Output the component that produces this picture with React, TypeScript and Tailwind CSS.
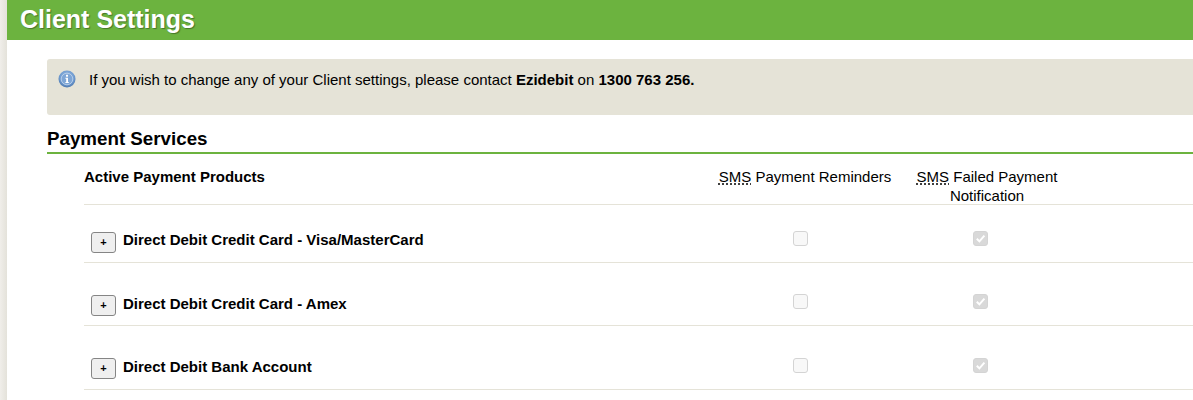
const font = { fontFamily: '"Liberation Sans", Arial, sans-serif' };

function InfoIcon() {
  return (
    <svg width="18" height="18" viewBox="0 0 18 18" className="shrink-0">
      <defs>
        <radialGradient id="g" cx="50%" cy="40%" r="60%">
          <stop offset="0%" stopColor="#a9c6e8" />
          <stop offset="70%" stopColor="#6f9bd0" />
          <stop offset="100%" stopColor="#4a76ad" />
        </radialGradient>
      </defs>
      <circle cx="9" cy="9" r="8.5" fill="url(#g)" />
      <circle cx="9" cy="9" r="5.8" fill="#7ea6d6" stroke="#c3d6ec" strokeWidth="0.8" />
      <rect x="8" y="4.8" width="2" height="1.9" fill="#fff" />
      <path d="M7.4 7.7h2.6v4.2h0.8v1.1H7.4v-1.1h0.8V8.8H7.4z" fill="#fff" />
    </svg>
  );
}

function Check({ checked }: { checked?: boolean }) {
  return (
    <span
      className={
        "flex h-[15px] w-[15px] items-center justify-center rounded-[3px] border border-[#d4d4d4] " +
        (checked ? "bg-[#d9d9d9]" : "bg-[#f8f8f8]")
      }
    >
      {checked && (
        <svg width="11" height="11" viewBox="0 0 11 11">
          <path d="M1.8 5.8 4.4 8.4 9.4 2.6" fill="none" stroke="#fff" strokeWidth="2" />
        </svg>
      )}
    </span>
  );
}

function Row({
  name,
  className,
  textClass,
  checkClass,
}: {
  name: string;
  className: string;
  textClass: string;
  checkClass: string;
}) {
  return (
    <div className={"flex items-start border-b border-[#e5e3d8] " + className}>
      <div className="flex w-[628px] items-start">
        <span className="ml-[7px] mt-[1px] flex h-[21px] w-[25px] items-center justify-center rounded-[3px] border border-[#858585] bg-[#efefef] text-[11px] font-bold leading-none text-black">
          +
        </span>
        <span className={"ml-[7px] text-[15px] font-bold leading-[18px] text-black " + textClass}>{name}</span>
      </div>
      <div className={"ml-[-20px] flex w-[216px] justify-center " + checkClass}>
        <Check />
      </div>
      <div className={"ml-[-18px] flex w-[180px] justify-center " + checkClass}>
        <Check checked />
      </div>
    </div>
  );
}

function Sms() {
  return <abbr className="underline decoration-dotted underline-offset-2">SMS</abbr>;
}

export default function App() {
  return (
    <div className="flex h-[400px] w-[1193px] overflow-hidden bg-white text-black" style={font}>
      <div className="h-full w-[7px] shrink-0 bg-gradient-to-r from-[#f0eeea] to-[#e4e2da]" />
      <div className="min-w-0 flex-1">
        <div className="flex h-[40px] items-center bg-[#6cb33f] pb-[1px] pl-[13px]">
          <h1 className="text-[25px] font-bold leading-none text-white [text-shadow:1px_1px_1px_rgba(0,0,0,0.35)]">
            Client Settings
          </h1>
        </div>
        <div className="pl-[40px]">
          <div className="mt-[19px] flex h-[56px] items-start rounded-l-[3px] bg-[#e5e3d7] pl-[11px] pt-[11px]">
            <InfoIcon />
            <p className="ml-[13px] text-[15px] leading-[20px]">
              If you wish to change any of your Client settings, please contact <b>Ezidebit</b> on{" "}
              <b>1300 763 256.</b>
            </p>
          </div>
          <h2 className="mt-[13px] border-b-2 border-[#6cb33f] pb-[2px] text-[18.75px] font-bold leading-[22px]">
            Payment Services
          </h2>
          <div className="pl-[37px]">
            <div className="flex h-[51px] items-start border-b border-[#e5e3d8] pt-[13px] text-[15px] leading-[20px]">
              <div className="mt-[1px] w-[628px] font-bold leading-[18px]">Active Payment Products</div>
              <div className="ml-[3px] mt-[1px] w-[180px] text-center leading-[18px]">
                <Sms /> Payment Reminders
              </div>
              <div className="ml-[16px] w-[152px] text-center leading-[19px]">
                <Sms /> Failed Payment Notification
              </div>
            </div>
            <Row name="Direct Debit Credit Card - Visa/MasterCard" className="h-[58px] pt-[26px]" textClass="" checkClass="" />
            <Row name="Direct Debit Credit Card - Amex" className="h-[63px] pt-[31px]" textClass="mt-[1px]" checkClass="" />
            <Row name="Direct Debit Bank Account" className="h-[64px] pt-[31px]" textClass="mt-[1px]" checkClass="mt-[1px]" />
          </div>
        </div>
      </div>
    </div>
  );
}
